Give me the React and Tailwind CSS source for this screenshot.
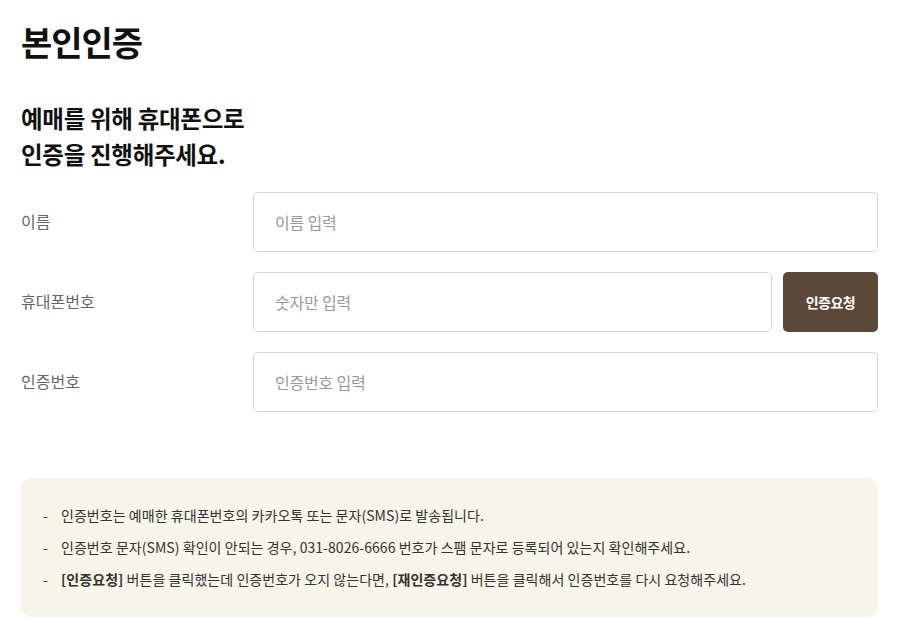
const font = { fontFamily: '"Noto Sans CJK KR", "Noto Sans", sans-serif' };

function Row({ label, placeholder, button }) {
  return (
    <div className="flex items-center">
      <label className="w-[232px] text-[16px] text-[#666] -mt-[2px]">{label}</label>
      <div className="flex flex-1 gap-[11px]">
        <input
          type="text"
          placeholder={placeholder}
          className="flex-1 h-[60px] border border-[#d6d6d6] rounded-[5px] px-[21px] text-[16px] tracking-[-0.2px] placeholder:text-[#999] outline-none"
        />
        {button && (
          <button className="w-[95px] h-[60px] rounded-[5px] bg-[#5c4838] text-white text-[14px] font-bold tracking-[-0.5px]">
            {button}
          </button>
        )}
      </div>
    </div>
  );
}

export default function App() {
  return (
    <div className="min-h-screen bg-white px-[21px] pt-[18px] text-[#111]" style={font}>
      <h1 className="text-[34px] font-bold leading-[48px] tracking-[-1px]">본인인증</h1>
      <p className="mt-[34px] text-[23.5px] font-semibold leading-[36px] tracking-[-0.3px]">
        예매를 위해 휴대폰으로
        <br />
        인증을 진행해주세요.
      </p>
      <div className="mt-[20px] w-[857px] flex flex-col gap-[20px]">
        <Row label="이름" placeholder="이름 입력" />
        <Row label="휴대폰번호" placeholder="숫자만 입력" button="인증요청" />
        <Row label="인증번호" placeholder="인증번호 입력" />
      </div>
      <div className="mt-[66px] w-[857px] rounded-[10px] bg-[#f7f4ea] px-[22px] pt-[26px] pb-[27px]">
        <ul className="flex flex-col gap-[10px] text-[14px] leading-[22px] text-[#333] tracking-[0.05px]">
          <li className="flex">
            <span className="w-[18px] shrink-0">-</span>
            <span>인증번호는 예매한 휴대폰번호의 카카오톡 또는 문자(SMS)로 발송됩니다.</span>
          </li>
          <li className="flex">
            <span className="w-[18px] shrink-0">-</span>
            <span>인증번호 문자(SMS) 확인이 안되는 경우, 031-8026-6666 번호가 스팸 문자로 등록되어 있는지 확인해주세요.</span>
          </li>
          <li className="flex">
            <span className="w-[18px] shrink-0">-</span>
            <span>
              <b className="font-bold">[인증요청]</b> 버튼을 클릭했는데 인증번호가 오지 않는다면, <b className="font-bold">[재인증요청]</b> 버튼을 클릭해서 인증번호를 다시 요청해주세요.
            </span>
          </li>
        </ul>
      </div>
    </div>
  );
}
